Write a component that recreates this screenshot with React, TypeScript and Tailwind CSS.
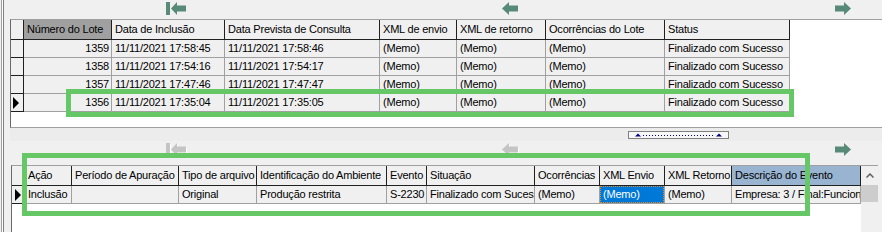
import React from 'react'

type Col = { label: string; w: string; right?: boolean; head?: string }

const topCols: Col[] = [
  { label: 'Número do Lote', w: 'w-[88px]', right: true, head: 'bg-[#a0a0a0]' },
  { label: 'Data de Inclusão', w: 'w-[113px]' },
  { label: 'Data Prevista de Consulta', w: 'w-[155px]' },
  { label: 'XML de envio', w: 'w-[77px]' },
  { label: 'XML de retorno', w: 'w-[89px]' },
  { label: 'Ocorrências do Lote', w: 'w-[119px]' },
  { label: 'Status', w: 'w-[125px]' },
]

const topRows = [
  ['1359', '11/11/2021 17:58:45', '11/11/2021 17:58:46', '(Memo)', '(Memo)', '(Memo)', 'Finalizado com Sucesso'],
  ['1358', '11/11/2021 17:54:16', '11/11/2021 17:54:17', '(Memo)', '(Memo)', '(Memo)', 'Finalizado com Sucesso'],
  ['1357', '11/11/2021 17:47:46', '11/11/2021 17:47:47', '(Memo)', '(Memo)', '(Memo)', 'Finalizado com Sucesso'],
  ['1356', '11/11/2021 17:35:04', '11/11/2021 17:35:05', '(Memo)', '(Memo)', '(Memo)', 'Finalizado com Sucesso'],
]

const bottomCols: Col[] = [
  { label: 'Ação', w: 'w-[47px]' },
  { label: 'Período de Apuração', w: 'w-[107px]' },
  { label: 'Tipo de arquivo', w: 'w-[78px]' },
  { label: 'Identificação do Ambiente', w: 'w-[130px]' },
  { label: 'Evento', w: 'w-[40px]' },
  { label: 'Situação', w: 'w-[108px]' },
  { label: 'Ocorrências', w: 'w-[65px]' },
  { label: 'XML Envio', w: 'w-[65px]' },
  { label: 'XML Retorno', w: 'w-[67px]' },
  { label: 'Descrição do Evento', w: 'w-[129px]', head: 'bg-[#99b4d1]' },
]

const bottomRow = ['Inclusão', '', 'Original', 'Produção restrita', 'S-2230', 'Finalizado com Sucesso', '(Memo)', '(Memo)', '(Memo)', 'Empresa: 3 / Final:Funcionário']

const NAV_ON = '#588a78'
const NAV_OFF = '#c4c4c4'

function FirstIcon({ off }: { off?: boolean }) {
  const shape = (
    <>
      <rect x="0" y="0" width="4" height="13" />
      <polygon points="5,6.5 11,0 11,3.5 20,3.5 20,9.5 11,9.5 11,13" />
    </>
  )
  return (
    <svg width="21" height="15" viewBox="0 0 21 15">
      {off && <g fill="#ffffff" transform="translate(1,1)">{shape}</g>}
      <g fill={off ? NAV_OFF : NAV_ON}>{shape}</g>
    </svg>
  )
}

function PriorIcon({ off }: { off?: boolean }) {
  const pts = '0,6.5 7,0 7,3.5 16,3.5 16,9.5 7,9.5 7,13'
  return (
    <svg width="17" height="15" viewBox="0 0 17 15">
      {off && <polygon points={pts} fill="#ffffff" transform="translate(1,1)" />}
      <polygon points={pts} fill={off ? NAV_OFF : NAV_ON} />
    </svg>
  )
}

function NextIcon() {
  return (
    <svg width="17" height="15" viewBox="0 0 17 15">
      <polygon points="16,6.5 9,0 9,3.5 0,3.5 0,9.5 9,9.5 9,13" fill={NAV_ON} />
    </svg>
  )
}

function Navigator({ off }: { off?: boolean }) {
  return (
    <div className="flex overflow-hidden">
      <div className="w-[333.5px] shrink-0 flex justify-center pt-[2px]"><FirstIcon off={off} /></div>
      <div className="w-[333.5px] shrink-0 flex justify-center pt-[2px]"><PriorIcon off={off} /></div>
      <div className="w-[333.5px] shrink-0 flex justify-center pt-[2px]"><NextIcon /></div>
    </div>
  )
}

function Pointer() {
  return (
    <svg width="6" height="12" viewBox="0 0 6 12">
      <polygon points="0,0 6,6 0,12" fill="#000000" />
    </svg>
  )
}

const fixedCell = 'shrink-0 flex items-center border-r border-b border-[#202020] overflow-hidden whitespace-nowrap'
const dataCell = 'shrink-0 flex items-center border-r border-b border-[#a0a0a0] bg-[#f0f0f0] overflow-hidden whitespace-nowrap'

export default function App() {
  return (
    <div
      className="relative w-[882px] h-[232px] overflow-hidden bg-[#f0f0f0] flex text-[11px] tracking-[-0.2px] text-black"
      style={{ fontFamily: '"Liberation Sans", Arial, sans-serif' }}
    >
      {/* left panel edge */}
      <div className="w-[10px] shrink-0 flex">
        <div className="w-[1px]" />
        <div className="w-[1px] bg-[#a0a0a0]" />
        <div className="w-[1px] bg-[#ffffff]" />
        <div className="w-[1px] bg-[#808080]" />
      </div>

      <div className="flex-1 min-w-0 flex flex-col">
        {/* upper navigator */}
        <div className="h-[19px]">
          <Navigator />
        </div>

        {/* upper grid */}
        <div className="h-[109px] bg-white border-t border-b border-l border-t-[#a0a0a0] border-b-[#a0a0a0] border-l-[#696969] flex flex-col">
          <div className="flex h-[20px]">
            <div className={`${fixedCell} w-[13px] bg-[#f0f0f0]`} />
            {topCols.map(c => (
              <div key={c.label} className={`${fixedCell} ${c.w} ${c.head ?? 'bg-[#f0f0f0]'} pl-[3px]`}>
                {c.label}
              </div>
            ))}
          </div>
          {topRows.map((r, i) => (
            <div key={r[0]} className="flex h-[18px]">
              <div className={`${fixedCell} w-[13px] bg-[#f0f0f0] pl-[2px]`}>
                {i === topRows.length - 1 && <Pointer />}
              </div>
              {r.map((v, j) => (
                <div key={j} className={`${dataCell} ${topCols[j].w} ${topCols[j].right ? 'justify-end pr-[2px]' : 'pl-[3px]'}`}>
                  {v}
                </div>
              ))}
            </div>
          ))}
        </div>

        {/* splitter */}
        <div className="h-[13px] bg-[#ececec] pt-[3px]">
          <div className="ml-[618px] w-[101px] h-[8px] border border-[#808080] bg-[#f7f7f7] flex items-center">
            <svg width="99" height="6" viewBox="0 0 99 6">
              <polygon points="6,4.5 9,1.5 12,4.5" fill="#000080" />
              <line x1="14" y1="3.5" x2="86" y2="3.5" stroke="#000080" strokeWidth="1" strokeDasharray="1 2" />
              <polygon points="87,4.5 90,1.5 93,4.5" fill="#000080" />
            </svg>
          </div>
        </div>

        {/* lower navigator */}
        <div className="h-[24px]">
          <Navigator off />
        </div>

        {/* lower grid */}
        <div className="flex-1 flex pl-[1px]">
          <div className="w-[867px] shrink-0 bg-white border-t border-l border-t-[#a0a0a0] border-l-[#696969] flex">
            <div className="w-[849px] shrink-0 flex flex-col">
              <div className="flex h-[20px]">
                <div className={`${fixedCell} w-[13px] bg-[#f0f0f0]`} />
                {bottomCols.map(c => (
                  <div key={c.label} className={`${fixedCell} ${c.w} ${c.head ?? 'bg-[#f0f0f0]'} pl-[3px]`}>
                    {c.label}
                  </div>
                ))}
              </div>
              <div className="flex h-[18px]">
                <div className={`${fixedCell} w-[13px] bg-[#f0f0f0] pl-[3px]`}>
                  <Pointer />
                </div>
                {bottomRow.map((v, j) =>
                  j === 7 ? (
                    <div key={j} className={`${dataCell} ${bottomCols[j].w} p-0`}>
                      <div className="w-full h-full bg-[#0078d7] text-white flex items-center pl-[2px] border border-dotted border-[#e08a2c]">
                        {v}
                      </div>
                    </div>
                  ) : (
                    <div key={j} className={`${dataCell} ${bottomCols[j].w} pl-[3px]`}>
                      {v}
                    </div>
                  )
                )}
              </div>
            </div>

            {/* vertical scrollbar */}
            <div className="w-[17px] shrink-0 bg-[#f0f0f0] flex flex-col">
              <div className="h-[19px] flex items-center justify-center">
                <svg width="8" height="5" viewBox="0 0 8 5">
                  <polyline points="0.5,4.5 4,1 7.5,4.5" fill="none" stroke="#606060" strokeWidth="1.5" />
                </svg>
              </div>
              <div className="h-[17px] bg-[#cdcdcd]" />
            </div>
          </div>
        </div>
      </div>

      {/* highlight annotations */}
      <div className="absolute left-[66px] top-[89px] w-[728px] h-[28px] border-[5px] border-[#65c765]" />
      <div className="absolute left-[22px] top-[153px] w-[788px] h-[63px] border-[5px] border-[#65c765]" />
    </div>
  )
}
